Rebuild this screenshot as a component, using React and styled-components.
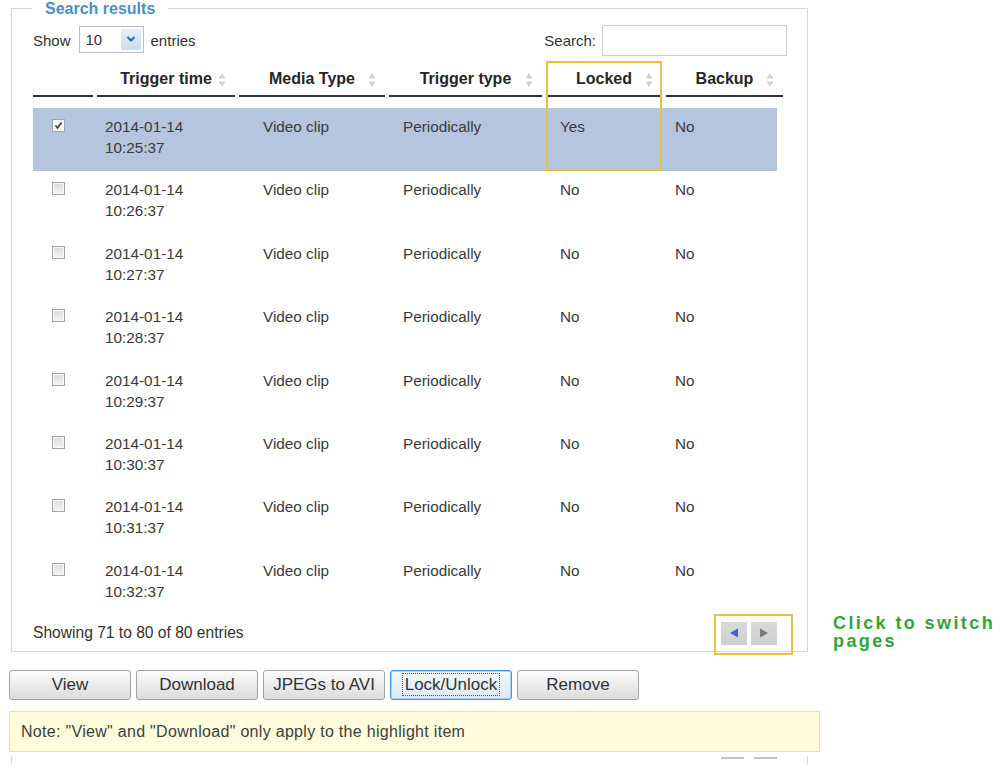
import React from "react";
import styled, { createGlobalStyle } from "styled-components";

const GlobalStyle = createGlobalStyle`
  body {
    margin: 0;
    background: #ffffff;
    font-family: "Liberation Sans", Arial, sans-serif;
    color: #333333;
  }
`;

const headers = [
    { label: "", width: 60 },
    { label: "Trigger time", width: 138 },
    { label: "Media Type", width: 146 },
    { label: "Trigger type", width: 153 },
    { label: "Locked", width: 116, marked: true },
    { label: "Backup", width: 117 },
];

const bodyWidths = [64, 158, 140, 157, 115, 110];

const rows = [25, 26, 27, 28, 29, 30, 31, 32].map((m) => ({
    date: "2014-01-14",
    time: `10:${m}:37`,
    media: "Video clip",
    trigger: "Periodically",
    locked: m === 25 ? "Yes" : "No",
    backup: "No",
    selected: m === 25,
}));

const buttons = ["View", "Download", "JPEGs to AVI", "Lock/Unlock", "Remove"];

function SortIcon() {
    return (
        <SortMark viewBox="0 0 8 16" width="8" height="16">
            <path d="M4 1 L7.5 6.5 L0.5 6.5 Z" fill="#d2d2d2" />
            <path d="M4 15 L7.5 9.5 L0.5 9.5 Z" fill="#d2d2d2" />
        </SortMark>
    );
}

function Checkbox({ checked }) {
    return (
        <Box checked={checked}>
            {checked && (
                <svg viewBox="0 0 11 11" width="11" height="11">
                    <path d="M2.5 5.5 L4.5 8 L8.5 2.5" fill="none" stroke="#3b3b3b" strokeWidth="1.6" />
                </svg>
            )}
        </Box>
    );
}

function App() {
    return (
        <Page>
            <GlobalStyle />
            <TopRow>
                <Fieldset>
                    <Legend>Search results</Legend>

                    <Toolbar>
                        <Group>
                            Show
                            <FakeSelect>
                                <span>10</span>
                                <SelectArrow>
                                    <svg viewBox="0 0 10 8" width="10" height="8">
                                        <path d="M1.5 2 L5 5.5 L8.5 2" fill="none" stroke="#2f66b3" strokeWidth="2" />
                                    </svg>
                                </SelectArrow>
                            </FakeSelect>
                            entries
                        </Group>
                        <Group>
                            Search:
                            <SearchInput type="text" />
                        </Group>
                    </Toolbar>

                    <HeadTable>
                        <thead>
                            <tr>
                                {headers.map((h, i) => (
                                    <Th key={i} width={h.width} marked={h.marked}>
                                        {h.label}
                                        {h.label && <SortIcon />}
                                    </Th>
                                ))}
                            </tr>
                        </thead>
                    </HeadTable>

                    <BodyTable>
                        <colgroup>
                            {bodyWidths.map((w, i) => (
                                <col key={i} style={{ width: w }} />
                            ))}
                        </colgroup>
                        <tbody>
                            {rows.map((r) => (
                                <Row key={r.time} selected={r.selected}>
                                    <CheckCell>
                                        <Checkbox checked={r.selected} />
                                    </CheckCell>
                                    <Td>
                                        {r.date}
                                        <br />
                                        {r.time}
                                    </Td>
                                    <Td>{r.media}</Td>
                                    <Td>{r.trigger}</Td>
                                    <Td>{r.locked}</Td>
                                    <Td>{r.backup}</Td>
                                </Row>
                            ))}
                        </tbody>
                    </BodyTable>

                    <Footer>
                        <span>Showing 71 to 80 of 80 entries</span>
                        <Pager>
                            <PageButton>
                                <svg viewBox="0 0 10 10" width="10" height="10">
                                    <path d="M1 5 L9 0.5 L9 9.5 Z" fill="#4a5fcf" />
                                </svg>
                            </PageButton>
                            <PageButton>
                                <svg viewBox="0 0 10 10" width="10" height="10">
                                    <path d="M9 5 L1 0.5 L1 9.5 Z" fill="#7a7a7a" />
                                </svg>
                            </PageButton>
                        </Pager>
                    </Footer>
                </Fieldset>

                <SideNote>Click to switch pages</SideNote>
            </TopRow>

            <ButtonRow>
                {buttons.map((b) => (
                    <ActionButton key={b} focused={b === "Lock/Unlock"}>
                        {b === "Lock/Unlock" ? <FocusRing>{b}</FocusRing> : b}
                    </ActionButton>
                ))}
            </ButtonRow>

            <Note>Note: "View" and "Download" only apply to the highlight item</Note>

            <NextPanel>
                <Stub />
                <Stub />
            </NextPanel>
        </Page>
    );
}

const Page = styled.div`
    width: 1001px;
    padding-left: 9px;
    box-sizing: border-box;
`;

const TopRow = styled.div`
    display: flex;
    align-items: flex-end;
`;

const Fieldset = styled.fieldset`
    flex: none;
    margin: 0 0 0 2px;
    width: 797px;
    box-sizing: border-box;
    border: 1px solid #d6d6d6;
    padding: 8px 20px 6px 21px;
    min-width: 0;
`;

const Legend = styled.legend`
    padding: 0 13px;
    margin-left: -1px;
    font-size: 16px;
    line-height: 17px;
    font-weight: bold;
    color: #4d8ec6;
`;

const Toolbar = styled.div`
    display: flex;
    justify-content: space-between;
    align-items: center;
    height: 31px;
    font-size: 15px;
    color: #333;
`;

const Group = styled.div`
    display: flex;
    align-items: center;
`;

const FakeSelect = styled.div`
    display: flex;
    align-items: center;
    justify-content: space-between;
    width: 65px;
    height: 27px;
    margin: -3px 7px 0 8px;
    box-sizing: border-box;
    border: 1px solid #bdbdbd;
    padding: 0 2px 0 6px;
    font-size: 15px;
    background: #fff;
`;

const SelectArrow = styled.span`
    display: flex;
    align-items: center;
    justify-content: center;
    width: 20px;
    height: 21px;
    background: linear-gradient(#e4eefa, #c9dcf3);
    border-radius: 2px;
`;

const SearchInput = styled.input`
    width: 185px;
    height: 31px;
    margin-left: 6px;
    box-sizing: border-box;
    border: 1px solid #cfcfcf;
    outline: none;
`;

const HeadTable = styled.table`
    border-collapse: separate;
    border-spacing: 4px 0;
    margin: 4px 0 0 -4px;
    table-layout: fixed;
`;

const Th = styled.th`
    position: relative;
    width: ${(p) => p.width}px;
    padding: 10px 0 7px;
    line-height: 18px;
    font-size: 16px;
    font-weight: bold;
    color: #262626;
    text-align: center;
    border-bottom: 2px solid #333;
    box-sizing: border-box;

    &::after {
        content: ${(p) => (p.marked ? "''" : "none")};
        position: absolute;
        left: 0;
        right: 0;
        top: 1px;
        height: 110px;
        border: 2.5px solid #e6c33c;
        box-sizing: border-box;
        z-index: 2;
    }
`;

const SortMark = styled.svg`
    position: absolute;
    right: 9px;
    top: 12px;
`;

const BodyTable = styled.table`
    border-collapse: collapse;
    table-layout: fixed;
    width: 744px;
    margin-top: 11px;
`;

const Row = styled.tr`
    background: ${(p) => (p.selected ? "#b6c5de" : "transparent")};
`;

const Td = styled.td`
    padding: 8px 0 13.4px 8px;
    vertical-align: top;
    font-size: 15.3px;
    line-height: 21px;
    color: #3a3a3a;
`;

const CheckCell = styled(Td)`
    padding-left: 19px;
    padding-top: 11px;
`;

const Box = styled.span`
    display: flex;
    align-items: center;
    justify-content: center;
    width: 13px;
    height: 13px;
    box-sizing: border-box;
    border: 1px solid #a3a3a3;
    background: ${(p) => (p.checked ? "#f4f4f4" : "linear-gradient(#dedede, #f3f3f3)")};
    box-shadow: inset 0 0 0 1px #f7f7f7;
`;

const Footer = styled.div`
    display: flex;
    justify-content: space-between;
    align-items: center;
    margin-top: 6px;
    height: 24px;
    font-size: 15.6px;
    color: #333;
`;

const Pager = styled.div`
    position: relative;
    display: flex;
    gap: 4px;
    margin-right: 10px;

    &::after {
        content: "";
        position: absolute;
        left: -7px;
        right: -16px;
        top: -8px;
        bottom: -10px;
        border: 2.5px solid #e6c33c;
    }
`;

const PageButton = styled.span`
    display: flex;
    align-items: center;
    justify-content: center;
    width: 26px;
    height: 23px;
    background: linear-gradient(#dadada, #cfcfcf);
`;

const SideNote = styled.div`
    flex: none;
    width: 168px;
    margin: 0 0 2px 25px;
    font-size: 18px;
    line-height: 18px;
    font-weight: bold;
    letter-spacing: 2.4px;
    color: #35a338;
`;

const ButtonRow = styled.div`
    display: flex;
    gap: 5px;
    margin-top: 18px;
`;

const ActionButton = styled.button`
    width: 122px;
    height: 30px;
    border: 1px solid ${(p) => (p.focused ? "#3d9ad8" : "#a3a3a3")};
    border-radius: 3px;
    background: ${(p) =>
        p.focused ? "linear-gradient(#f4f9fd, #dbe9f5)" : "linear-gradient(#fbfbfb, #dcdcdc)"};
    box-shadow: ${(p) => (p.focused ? "inset 0 0 0 1px #a9d3f0" : "none")};
    font-family: "Liberation Sans", Arial, sans-serif;
    font-size: 17px;
    color: #333;
    padding: 0;
`;

const FocusRing = styled.span`
    outline: 1px dotted #555;
    padding: 1px 2px;
`;

const Note = styled.div`
    display: flex;
    align-items: center;
    width: 811px;
    height: 41px;
    margin-top: 11px;
    box-sizing: border-box;
    padding-left: 11px;
    background: #fefcdb;
    border: 1px solid #e7e0a4;
    font-size: 16px;
    letter-spacing: 0.3px;
    color: #404040;
`;

const NextPanel = styled.div`
    display: flex;
    justify-content: flex-end;
    gap: 10px;
    width: 797px;
    height: 12px;
    margin: 4px 0 0 2px;
    padding-right: 30px;
    box-sizing: border-box;
    border-left: 1px solid #d6d6d6;
    border-right: 1px solid #d6d6d6;
`;

const Stub = styled.span`
    width: 23px;
    height: 2px;
    margin-top: 1px;
    background: #c4c4c4;
`;

export default App;
